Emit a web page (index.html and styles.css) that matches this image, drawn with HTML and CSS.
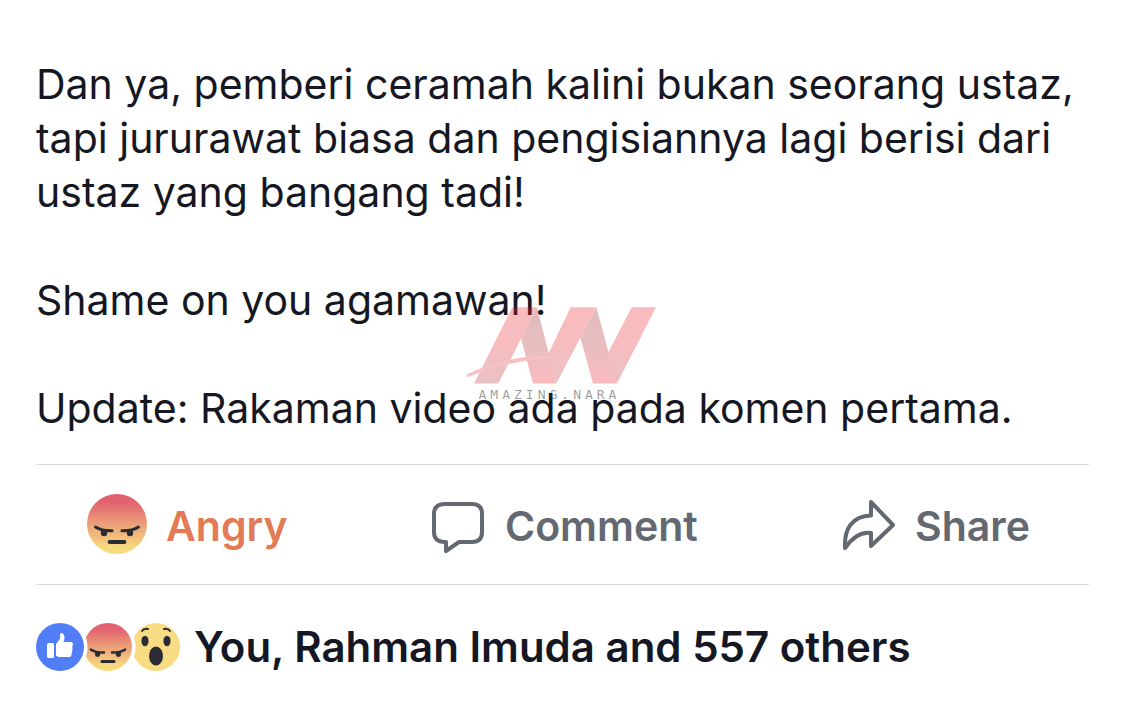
FILE: index.html
```html
<!DOCTYPE html>
<html lang="ms">
<head>
  <meta charset="UTF-8" />
  <meta name="viewport" content="width=device-width, initial-scale=1.0"/>
  <title>Post</title>
  <link rel="stylesheet" href="styles.css">
</head>
<body>
  <svg class="defs" width="0" height="0" aria-hidden="true">
    <defs>
      <linearGradient id="angryFill" x1="0" y1="0" x2="0" y2="1">
        <stop offset="0.12" stop-color="#e2606f"/>
        <stop offset="0.5" stop-color="#eb9f79"/>
        <stop offset="0.9" stop-color="#f8da7e"/>
      </linearGradient>
      <symbol id="angry" viewBox="0 0 60 60">
        <circle cx="30" cy="30" r="30" fill="url(#angryFill)"/>
        <g fill="none" stroke="#2b2b33" stroke-width="3" stroke-linecap="round">
          <path d="M8.500 33q6 4 16.500 3.800M51.500 33q-6 4-16.500 3.800"/>
          <path d="M22.500 48h15" stroke-width="3.800"/>
        </g>
        <circle cx="17" cy="39" r="3.200" fill="#2b2b33"/>
        <circle cx="43" cy="39" r="3.200" fill="#2b2b33"/>
      </symbol>
    </defs>
  </svg>

  <article class="post">
    <div class="post-text">
      <p>Dan ya, pemberi ceramah kalini bukan seorang ustaz, tapi jururawat biasa dan pengisiannya lagi berisi dari ustaz yang bangang tadi!</p>
      <p>Shame on you agamawan!</p>
      <p>Update: Rakaman video ada pada komen pertama.</p>

      <div class="watermark">
        <svg viewBox="52 53 567 230" aria-hidden="true">
          <defs>
            <linearGradient id="bar" x1="0" y1="0" x2="0" y2="1">
              <stop offset="0" stop-color="#ec2028"/>
              <stop offset="0.5" stop-color="#e4282f"/>
              <stop offset="1" stop-color="#b8343a"/>
            </linearGradient>
            <linearGradient id="fold" x1="0" y1="0" x2="0" y2="1">
              <stop offset="0" stop-color="#a01c24"/>
              <stop offset="0.45" stop-color="#b02a31"/>
              <stop offset="1" stop-color="#ee2028"/>
            </linearGradient>
          </defs>
          <path fill="url(#bar)" d="M188 53H262L146 282H73Z"/>
          <path fill="url(#bar)" d="M363 53H440L320 282L296 193Z"/>
          <path fill="url(#bar)" d="M546 53H619L502 282L474 193Z"/>
          <path fill="url(#fold)" d="M262 53L320 282H250L214 147Z"/>
          <path fill="url(#fold)" d="M440 53L502 282H430L392 144Z"/>
          <path fill="#e8343b" d="M52 254Q190 190 345 198V205Q190 206 52 264Z"/>
        </svg>
        <span>AMAZING.NARA</span>
      </div>
    </div>

    <div class="actions">
      <button type="button" class="action active">
        <svg class="face" aria-hidden="true"><use href="#angry"/></svg>
        Angry
      </button>
      <button type="button" class="action">
        <svg class="icon" viewBox="0 0 54 54" aria-hidden="true">
          <path d="M13 5H40Q50 5 50 15V33Q50 43 40 43H27L14 52V43H13Q2 43 2 33V15Q2 5 13 5Z"/>
        </svg>
        Comment
      </button>
      <button type="button" class="action">
        <svg class="icon" viewBox="0 0 54 54" aria-hidden="true">
          <path d="M29 3L51 26L29 47V34Q15 32 3 49C2 30 10 17 29 16.500Z"/>
        </svg>
        Share
      </button>
    </div>

    <div class="reactions">
      <div class="badges">
        <svg viewBox="0 0 48 48" aria-hidden="true">
          <circle cx="24" cy="24" r="24" fill="#517ef6"/>
          <rect x="11" y="20" width="7" height="15" rx="1.500" fill="#fff"/>
          <path fill="#fff" d="M20 21L24 16V11.500Q24 10 25.500 10Q28.500 10.500 28.500 15L27.500 19H34.500Q37 19 37 21.500Q37 23 36 23.500Q37.500 25 36 27.500Q37 29 35.500 30.500Q36 34 33 34H24Q21.500 34 20 32.500Z"/>
        </svg>
        <svg class="cut" aria-hidden="true"><use href="#angry"/></svg>
        <svg class="cut" viewBox="0 0 48 48" aria-hidden="true">
          <circle cx="24" cy="24" r="24" fill="#f8dc83"/>
          <g fill="#2b2b36">
            <ellipse cx="13" cy="18" rx="3.600" ry="5.200"/>
            <ellipse cx="35" cy="18" rx="3.600" ry="5.200"/>
            <ellipse cx="24" cy="33" rx="7" ry="9.500"/>
          </g>
          <path d="M10 8q2-3 6-2M32 6q4-1 6 2" fill="none" stroke="#2b2b36" stroke-width="2" stroke-linecap="round"/>
        </svg>
      </div>
      <span>You, Rahman Imuda and 557 others</span>
    </div>
  </article>
</body>
</html>
```
FILE: styles.css
```css
* {
  box-sizing: border-box;
  margin: 0;
  padding: 0;
}

body {
  font-family: Inter, "Liberation Sans", sans-serif;
  font-size: 41px;
  line-height: 54px;
  color: #151722;
  background: #fff;
}

.defs {
  position: absolute;
}

.post {
  padding: 57px 36px 32px;
}

.post-text {
  position: relative;
  padding-bottom: 29px;
}

.post-text p + p {
  margin-top: 54px;
}

.watermark {
  position: absolute;
  top: 250px;
  left: 431px;
  width: 189px;
  text-align: center;
  pointer-events: none;
}

.watermark svg {
  display: block;
  width: 189px;
  height: 77px;
  opacity: 0.3;
}

.watermark span {
  display: block;
  padding-right: 24px;
  font: 13px/22px "DejaVu Sans Mono", monospace;
  letter-spacing: 4px;
  color: rgba(60, 60, 60, 0.5);
}

.actions {
  display: flex;
  justify-content: space-between;
  height: 121px;
  padding: 0 59px 0 51px;
  border-top: 1px solid #dadce0;
  border-bottom: 1px solid #dadce0;
}

.action {
  display: flex;
  align-items: center;
  gap: 19px;
  padding-top: 3px;
  font: inherit;
  font-weight: 600;
  color: #646870;
  background: none;
  border: none;
  cursor: pointer;
}

.action.active {
  color: #e27a55;
}

.face {
  width: 60px;
  height: 60px;
  margin-bottom: 4px;
}

.icon {
  width: 54px;
  height: 54px;
  fill: none;
  stroke: #646870;
  stroke-width: 4;
  stroke-linejoin: round;
}

.reactions {
  display: flex;
  align-items: center;
  gap: 14px;
  padding-top: 35px;
  font-size: 42px;
  font-weight: 600;
}

.badges {
  display: flex;
}

.badges svg {
  width: 48px;
  height: 48px;
}

/* each badge bites a little out of the next one */
.badges .cut {
  -webkit-mask: radial-gradient(circle at -24px 24px, transparent 27px, #000 28px);
  mask: radial-gradient(circle at -24px 24px, transparent 27px, #000 28px);
}
```
